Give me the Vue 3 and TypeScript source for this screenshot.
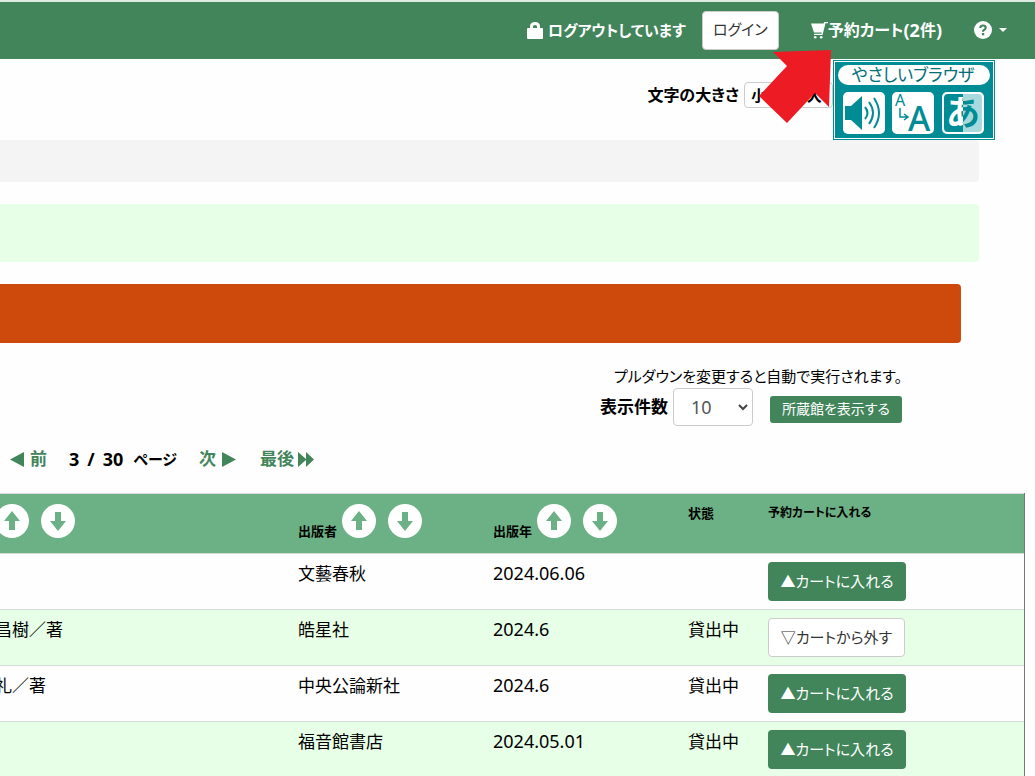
<script setup lang="ts">
import { ref } from 'vue'

interface Book {
  author: string
  publisher: string
  year: string
  status: string
  inCart: boolean
}

const pageSize = ref('10')
const books = ref<Book[]>([
  { author: '', publisher: '文藝春秋', year: '2024.06.06', status: '', inCart: false },
  { author: '昌樹／著', publisher: '皓星社', year: '2024.6', status: '貸出中', inCart: true },
  { author: '礼／著', publisher: '中央公論新社', year: '2024.6', status: '貸出中', inCart: false },
  { author: '', publisher: '福音館書店', year: '2024.05.01', status: '貸出中', inCart: false },
])
const columns = [
  { key: 'author', label: '' },
  { key: 'publisher', label: '出版者' },
  { key: 'year', label: '出版年' },
]
</script>

<template>
  <div class="page">
    <header class="navbar">
      <span class="login-state">
        <svg class="lock" viewBox="0 0 16 17" aria-hidden="true">
          <path fill="#fff" fill-rule="evenodd" d="M3 6V4.500Q3 0 8 0T13 4.500V6H15Q16 6 16 7V16Q16 17 15 17H1Q0 17 0 16V7Q0 6 1 6ZM6 6H10V4.500Q10 3 8 3T6 4.500Z" />
        </svg>
        ログアウトしています
      </span>
      <button class="btn btn-light login" type="button">ログイン</button>
      <a class="cart" href="#">
        <svg class="cart-icon" viewBox="0 0 17 17" aria-hidden="true">
          <path fill="#fff" d="M0 1.500H12.500L13.300 0H17V1.200H14.500L11.500 13H3V11.700H10.400L10.800 10.500H3Z" />
          <circle cx="4.200" cy="15.200" r="1.300" fill="#fff" />
          <circle cx="10.200" cy="15.200" r="1.300" fill="#fff" />
        </svg>予約カート<span class="latin">(2</span>件<span class="latin">)</span>
      </a>
      <button class="help" type="button" aria-label="ヘルプ">
        <svg class="help-icon" viewBox="0 0 18 18" aria-hidden="true">
          <circle cx="9" cy="9" r="9" fill="#fff" />
          <path d="M6.300 7Q6.300 4.500 9 4.500T11.700 6.800Q11.700 8.200 10 9Q9 9.500 9 10.800" fill="none" stroke="#42855b" stroke-width="2.200" />
          <rect x="7.900" y="12" width="2.300" height="2.300" fill="#42855b" />
        </svg>
        <svg class="caret" viewBox="0 0 8 4" aria-hidden="true"><path d="M0 0H8L4 4Z" fill="#fff" /></svg>
      </button>
    </header>

    <div class="text-size">
      <span>文字の大きさ</span>
      <div class="size-group">
        <button type="button">小</button>
        <button type="button">中</button>
        <button type="button">大</button>
      </div>
    </div>

    <a class="easy-browser" href="#" aria-label="やさしいブラウザ">
      <svg viewBox="0 0 162 80" aria-hidden="true">
        <rect width="162" height="80" fill="#008c95" />
        <rect x="1.500" y="1.500" width="159" height="77" fill="none" stroke="#fff" />
        <rect x="5" y="5" width="152" height="20" rx="10" fill="#fff" />
        <text x="80" y="21" text-anchor="middle" class="eb-title">やさしいブラウザ</text>
        <rect x="10" y="32" width="42" height="42" rx="5" fill="#fff" />
        <path d="M12 46H18L29 36V70L18 60H12Z" fill="#008c95" />
        <path d="M32 47Q37 53 32 59M36 42Q44 53 36 64M41 38Q51 53 41 68" fill="none" stroke="#008c95" stroke-width="2" />
        <rect x="59" y="32" width="42" height="42" rx="5" fill="#fff" />
        <text x="62" y="46" class="eb-small">A</text>
        <text x="75" y="71" class="eb-big">A</text>
        <path d="M67 48V57H74M71 54L75 57L71 60" fill="none" stroke="#008c95" stroke-width="1.500" />
        <rect x="109" y="32" width="42" height="42" rx="5" fill="#fff" />
        <path d="M130 34H115Q111 34 111 38V68Q111 72 115 72H130Z" fill="#008c95" />
        <path d="M130 34H145Q149 34 149 38V68Q149 72 145 72H130Z" fill="#a8dadd" />
        <clipPath id="kana-left"><rect x="109" y="32" width="21" height="42" /></clipPath>
        <clipPath id="kana-right"><rect x="130" y="32" width="21" height="42" /></clipPath>
        <text x="130" y="65" text-anchor="middle" class="eb-kana" fill="#fff" clip-path="url(#kana-left)">あ</text>
        <text x="130" y="65" text-anchor="middle" class="eb-kana" fill="#008c95" clip-path="url(#kana-right)" aria-hidden="true">あ</text>
      </svg>
    </a>
    <svg class="pointer" viewBox="0 0 72 74" aria-hidden="true">
      <path d="M14 3L72 1L70 58L56 44L28 74L0 47L28 17Z" fill="#ed1c24" />
    </svg>

    <main>
      <div class="panel breadcrumb"></div>
      <div class="panel notice"></div>
      <div class="panel alert"></div>

      <div class="controls">
        <p>プルダウンを変更すると自動で実行されます。</p>
        <div class="controls-row">
          <label for="page-size">表示件数</label>
          <span class="select-wrap">
            <select id="page-size" v-model="pageSize">
              <option>10</option>
              <option>20</option>
              <option>50</option>
            </select>
            <svg viewBox="0 0 10 7" aria-hidden="true"><path d="M1 1L5 5L9 1" fill="none" stroke="#444" stroke-width="2" /></svg>
          </span>
          <button class="btn btn-green holdings" type="button">所蔵館を表示する</button>
        </div>
      </div>

      <nav class="pager">
        <a href="#">
          <svg class="tri" viewBox="0 0 14 15" aria-hidden="true"><path d="M14 0V15L0 7.500Z" fill="#42855b" /></svg>前</a>
        <span class="current">
          <span class="latin count"><span>3</span><span>/</span><span>30</span></span>
          <span>ページ</span>
        </span>
        <a href="#">次<svg class="tri" viewBox="0 0 14 15" aria-hidden="true"><path d="M0 0V15L14 7.500Z" fill="#42855b" /></svg></a>
        <a class="last" href="#">最後<svg class="tri-double" viewBox="0 0 16 15" aria-hidden="true"><path d="M0 0L8 7V0L16 7.500L8 15V8L0 15Z" fill="#42855b" /></svg></a>
      </nav>

      <div class="table-wrap">
        <table>
          <colgroup>
            <col class="c-author" />
            <col class="c-text" />
            <col class="c-text" />
            <col class="c-status" />
            <col />
          </colgroup>
          <thead>
            <tr>
              <th v-for="col in columns" :key="col.key" scope="col">
                <div class="sort-head">
                  <span v-if="col.label">{{ col.label }}</span>
                  <button type="button" aria-label="昇順">
                    <svg viewBox="0 0 34 34" aria-hidden="true">
                      <circle cx="17" cy="17" r="17" fill="#fff" />
                      <path d="M17 7L25 17H20V26H14V17H9Z" fill="#6cb185" />
                    </svg>
                  </button>
                  <button class="desc" type="button" aria-label="降順">
                    <svg viewBox="0 0 34 34" aria-hidden="true">
                      <circle cx="17" cy="17" r="17" fill="#fff" />
                      <path d="M17 27L25 17H20V8H14V17H9Z" fill="#6cb185" />
                    </svg>
                  </button>
                </div>
              </th>
              <th scope="col">状態</th>
              <th class="cart-head" scope="col">予約カートに入れる</th>
            </tr>
          </thead>
          <tbody>
            <tr v-for="(book, i) in books" :key="i">
              <td>{{ book.author }}</td>
              <td>{{ book.publisher }}</td>
              <td class="date">{{ book.year }}</td>
              <td>{{ book.status }}</td>
              <td>
                <button
                  type="button"
                  class="btn cart-btn"
                  :class="book.inCart ? 'btn-light' : 'btn-green'"
                  @click="book.inCart = !book.inCart"
                >{{ book.inCart ? '▽カートから外す' : '▲カートに入れる' }}</button>
              </td>
            </tr>
          </tbody>
        </table>
      </div>
    </main>
  </div>
</template>

<style>
body {
  margin: 0;
  background: #fefefe;
}
</style>

<style scoped>
* {
  box-sizing: border-box;
}
.page {
  position: relative;
  height: 100vh;
  overflow: hidden;
  color: #000;
  font: 17px/24px "Noto Sans", "Noto Sans CJK JP", sans-serif;
  font-feature-settings: "palt";
  white-space: nowrap;
}
button,
select {
  font: inherit;
  font-feature-settings: inherit;
  cursor: pointer;
}
a {
  text-decoration: none;
}
.latin {
  font-size: 18px;
}
.navbar {
  display: flex;
  align-items: center;
  justify-content: flex-end;
  height: 59px;
  padding: 0 28px 1px 0;
  border-top: 2px solid #dcebe2;
  background: #42855b;
  color: #fff;
  font-weight: 700;
}
.login-state {
  display: flex;
  align-items: center;
  gap: 5px;
  font-size: 15px;
}
.lock {
  width: 16px;
  height: 17px;
}
.btn {
  display: inline-flex;
  align-items: center;
  justify-content: center;
  height: 39px;
  padding: 0 0 2px;
  border: 1px solid transparent;
  border-radius: 4px;
  font-weight: 400;
}
.btn-light {
  background: #fff;
  border-color: #ccc;
  color: #333;
}
.btn-green {
  background: #42855b;
  color: #fff;
}
.login {
  width: 77px;
  margin: 0 32px 0 16px;
  font-size: 15px;
}
.cart {
  display: flex;
  align-items: center;
  color: #fff;
  font-size: 16px;
}
.cart-icon {
  width: 17px;
  height: 17px;
}
.help {
  display: flex;
  align-items: center;
  gap: 7px;
  margin-left: 32px;
  padding: 0;
  border: 0;
  background: none;
}
.help-icon {
  width: 18px;
  height: 18px;
}
.caret {
  width: 8px;
  height: 4px;
}
.text-size {
  display: flex;
  align-items: center;
  justify-content: flex-end;
  gap: 5px;
  height: 81px;
  padding: 0 202px 9px 0;
  font-size: 16px;
  font-weight: 700;
}
.size-group {
  display: flex;
  width: 89px;
  height: 26px;
  padding-right: 4px;
  border: 1px solid #ccc;
  border-radius: 4px;
}
.size-group button {
  flex: 1;
  padding: 0;
  border: 0;
  background: none;
  font-size: 15px;
  line-height: 24px;
}
.easy-browser {
  position: absolute;
  top: 60px;
  right: 40px;
  width: 162px;
  height: 80px;
}
.easy-browser svg {
  display: block;
}
.eb-title {
  font-size: 17px;
  font-weight: 400;
  fill: #006f78;
}
.eb-small {
  font-size: 16px;
  fill: #008c95;
}
.eb-big {
  font-size: 34px;
  font-weight: 500;
  fill: #008c95;
}
.eb-kana {
  font-size: 34px;
  font-weight: 700;
}
.pointer {
  position: absolute;
  top: 49px;
  right: 204px;
  width: 72px;
  height: 74px;
}
.panel {
  margin: 0 56px 22px 0;
  border-radius: 0 4px 4px 0;
}
.breadcrumb {
  height: 42px;
  background: #f4f4f4;
}
.notice {
  height: 58px;
  background: #e6ffe6;
}
.alert {
  height: 59px;
  margin-right: 74px;
  background: #ce4a0c;
}
.controls {
  display: flex;
  flex-direction: column;
  align-items: flex-end;
  padding-right: 133px;
}
.controls p {
  margin: 0;
  font-size: 15px;
  line-height: 23px;
}
.controls-row {
  display: flex;
  align-items: center;
}
.controls-row label {
  font-weight: 700;
}
.select-wrap {
  position: relative;
  margin: 0 17px 0 5px;
}
.select-wrap select {
  display: block;
  width: 80px;
  height: 38px;
  padding: 0 17px;
  border: 1px solid #ccc;
  border-radius: 4px;
  background: #fff;
  color: #555;
  font-size: 18px;
  appearance: none;
}
.select-wrap svg {
  position: absolute;
  top: 16px;
  right: 5px;
  width: 10px;
  height: 7px;
  pointer-events: none;
}
.holdings {
  width: 132px;
  height: 27px;
  margin-top: 4px;
  padding: 0;
  font-size: 14px;
  border-radius: 3px;
}
.pager {
  display: flex;
  align-items: center;
  height: 67px;
  padding: 0 0 1px 10px;
  font-weight: 700;
}
.pager a {
  display: flex;
  align-items: center;
  gap: 6px;
  color: #42855b;
}
.pager .last {
  gap: 4px;
  margin-left: 24px;
}
.current {
  display: flex;
  gap: 10px;
  margin: 0 22px;
  font-size: 15px;
}
.count {
  display: flex;
  gap: 8px;
}
.tri {
  width: 14px;
  height: 15px;
}
.tri-double {
  width: 16px;
  height: 15px;
}
.table-wrap {
  margin-right: 10px;
  overflow: hidden;
}
table {
  width: calc(100% + 5px);
  margin-left: -5px;
  table-layout: fixed;
  border-spacing: 0;
  border-right: 1px solid #777;
}
.c-author {
  width: 295px;
}
.c-text {
  width: 195px;
}
.c-status {
  width: 80px;
}
th {
  height: 60px;
  padding: 7px 8px;
  border-top: 1px solid #ddd;
  background: #6cb185;
  font-size: 13px;
  text-align: left;
  vertical-align: top;
}
.cart-head {
  font-size: 12px;
}
td {
  height: 56px;
  padding: 8px;
  border-top: 1px solid #d4dad4;
  vertical-align: top;
}
th:first-child,
td:first-child {
  padding-left: 0;
}
tbody tr:nth-child(even) {
  background: #e6ffe6;
}
.sort-head {
  display: flex;
  align-items: flex-start;
  padding-top: 3px;
}
.sort-head span {
  margin: 15px 5px 0 0;
}
.sort-head button {
  width: 34px;
  height: 34px;
  padding: 0;
  border: 0;
  background: none;
}
.sort-head .desc {
  margin-left: 12px;
}
.sort-head svg {
  display: block;
}
.date {
  font-size: 18px;
  line-height: 22px;
}
.cart-btn {
  width: 138px;
  font-size: 15px;
}
td .btn-light {
  width: 137px;
}
</style>
